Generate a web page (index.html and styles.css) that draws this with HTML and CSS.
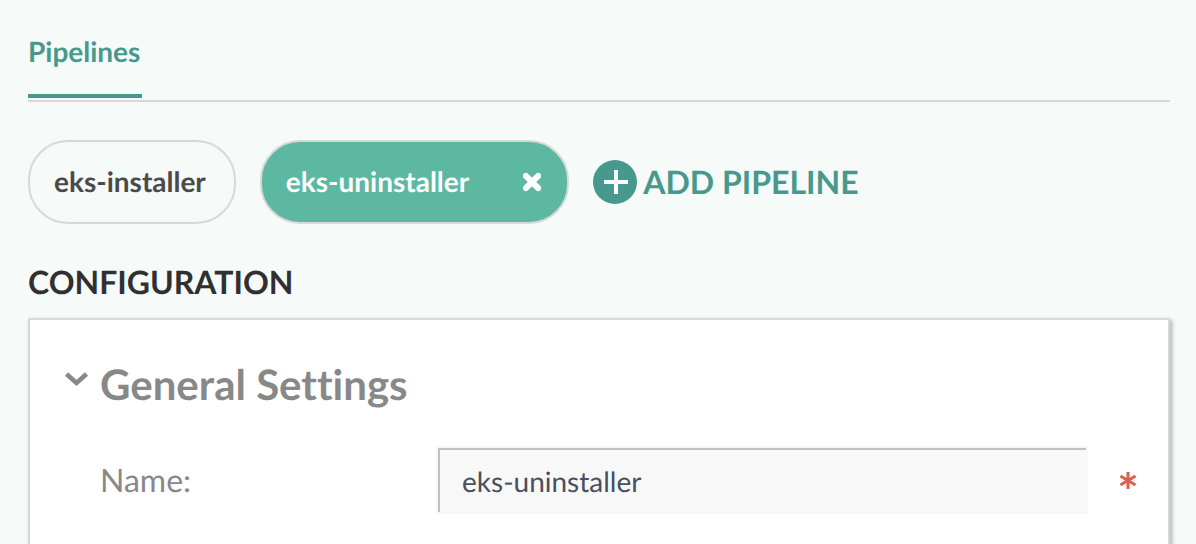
FILE: index.html
```html
<!DOCTYPE html>
<html lang="en">
<head>
<meta charset="utf-8">
<title>Pipelines</title>
<link rel="stylesheet" href="styles.css">
</head>
<body>
<nav class="tabs">
  <a class="tab" href="#pipelines" aria-current="page">Pipelines</a>
</nav>
<main id="pipelines">
  <div class="pipelines">
    <button class="pill" type="button">eks-installer</button>
    <div class="pill pill-active">
      <button class="pill-label" type="button">eks-uninstaller</button>
      <button class="pill-remove" type="button" aria-label="Remove eks-uninstaller">
        <svg class="cross" viewBox="0 0 20 20"><path d="M3.500 3.500L16.500 16.500M16.500 3.500L3.500 16.500" stroke="currentColor" stroke-width="5.500"/><path d="M4 4L16 16M16 4L4 16" stroke="currentColor" stroke-width="4.500" stroke-linecap="round"/></svg>
      </button>
    </div>
    <button class="add" type="button">
      <svg class="plus" viewBox="0 0 44 44"><circle cx="22" cy="22" r="22" fill="currentColor"/><path d="M11 22H35M23 10V34" stroke="#fff" stroke-width="4"/></svg>
      ADD PIPELINE
    </button>
  </div>
  <h2 class="heading">CONFIGURATION</h2>
  <section class="panel">
    <h3 class="section-title">
      <button class="toggle" type="button" aria-expanded="true">
        <svg class="chevron" viewBox="0 0 24 16"><path d="M2.500 3L12.500 12L22.500 3" fill="none" stroke="currentColor" stroke-width="4.500"/></svg>
        General Settings
      </button>
    </h3>
    <div class="field">
      <label class="label" for="name">Name:</label>
      <input class="input" id="name" type="text" value="eks-uninstaller" required>
      <svg class="required" viewBox="0 0 18 18" role="img" aria-label="required"><path d="M8 1V18M0.500 5L15.500 14M15.500 5L0.500 14" stroke="currentColor" stroke-width="3"/></svg>
    </div>
  </section>
</main>
</body>
</html>
```
FILE: styles.css
```css
* {
  box-sizing: border-box;
}

body {
  margin: 0;
  padding: 32px 26px 0 28px;
  background: #f6faf9;
  color: #4a4a4a;
  font-family: Lato, sans-serif;
  font-size: 28px;
  font-variant-ligatures: none;
  line-height: 40px;
  text-rendering: geometricPrecision;
}

button {
  padding: 0;
  border: 0;
  background: none;
  color: inherit;
  font: inherit;
  font-variant-ligatures: none;
  text-rendering: inherit;
  cursor: pointer;
}

.tabs {
  display: flex;
  padding-bottom: 2px;
  border-bottom: 2px solid #d8d8d8;
}

.tab {
  padding: 0 2px 24px 0;
  border-bottom: 4px solid #46998c;
  color: #46998c;
  font-weight: 700;
  line-height: 38px;
  text-decoration: none;
}

.pipelines {
  display: flex;
  align-items: center;
  gap: 24px;
  margin-top: 38px;
}

.pill {
  display: flex;
  align-items: center;
  height: 84px;
  padding: 0 28px 2px 24px;
  border: 2px solid #d8d8d8;
  border-radius: 40px;
  font-weight: 700;
}

.pill-active {
  gap: 52px;
  padding-right: 24px;
  background: #5cb8a0;
  color: #fff;
}

.pill-remove {
  display: flex;
  padding-top: 2px;
}

.cross {
  width: 22px;
  height: 22px;
}

.add {
  display: flex;
  align-items: center;
  gap: 6px;
  color: #46998c;
  font-size: 32px;
  font-weight: 700;
}

.plus {
  width: 44px;
  height: 44px;
}

.heading {
  margin: 38px 0 16px;
  color: #303030;
  font-size: 32px;
  font-weight: 700;
  line-height: 40px;
}

.panel {
  padding: 38px 80px 30px 34px;
  border: 2px solid #d8d8d8;
  border-bottom: 0;
  background: #fff;
  box-shadow: 2px 2px 4px #b0b0b0;
}

.section-title {
  margin: 0;
  color: #888;
  font-size: 42px;
  font-weight: 700;
  line-height: 52px;
}

.toggle {
  display: flex;
  gap: 12px;
}

.chevron {
  width: 24px;
  height: 16px;
  margin-top: 13px;
}

.field {
  display: flex;
  align-items: center;
  margin: 36px 0 0 36px;
}

.label {
  width: 336px;
  color: #888;
  font-size: 32px;
}

.input {
  flex: 1;
  min-width: 0;
  height: 68px;
  padding: 2px 24px 0;
  border: 2px solid #f8f8f8;
  border-radius: 0;
  background: #f8f8f8;
  box-shadow: inset 2px 2px #c0c0c0;
  color: #485060;
  font: inherit;
  font-variant-ligatures: none;
  text-rendering: inherit;
}

.required {
  width: 18px;
  height: 18px;
  margin: 0 -50px 0 32px;
  color: #dc5f4c;
}
```
